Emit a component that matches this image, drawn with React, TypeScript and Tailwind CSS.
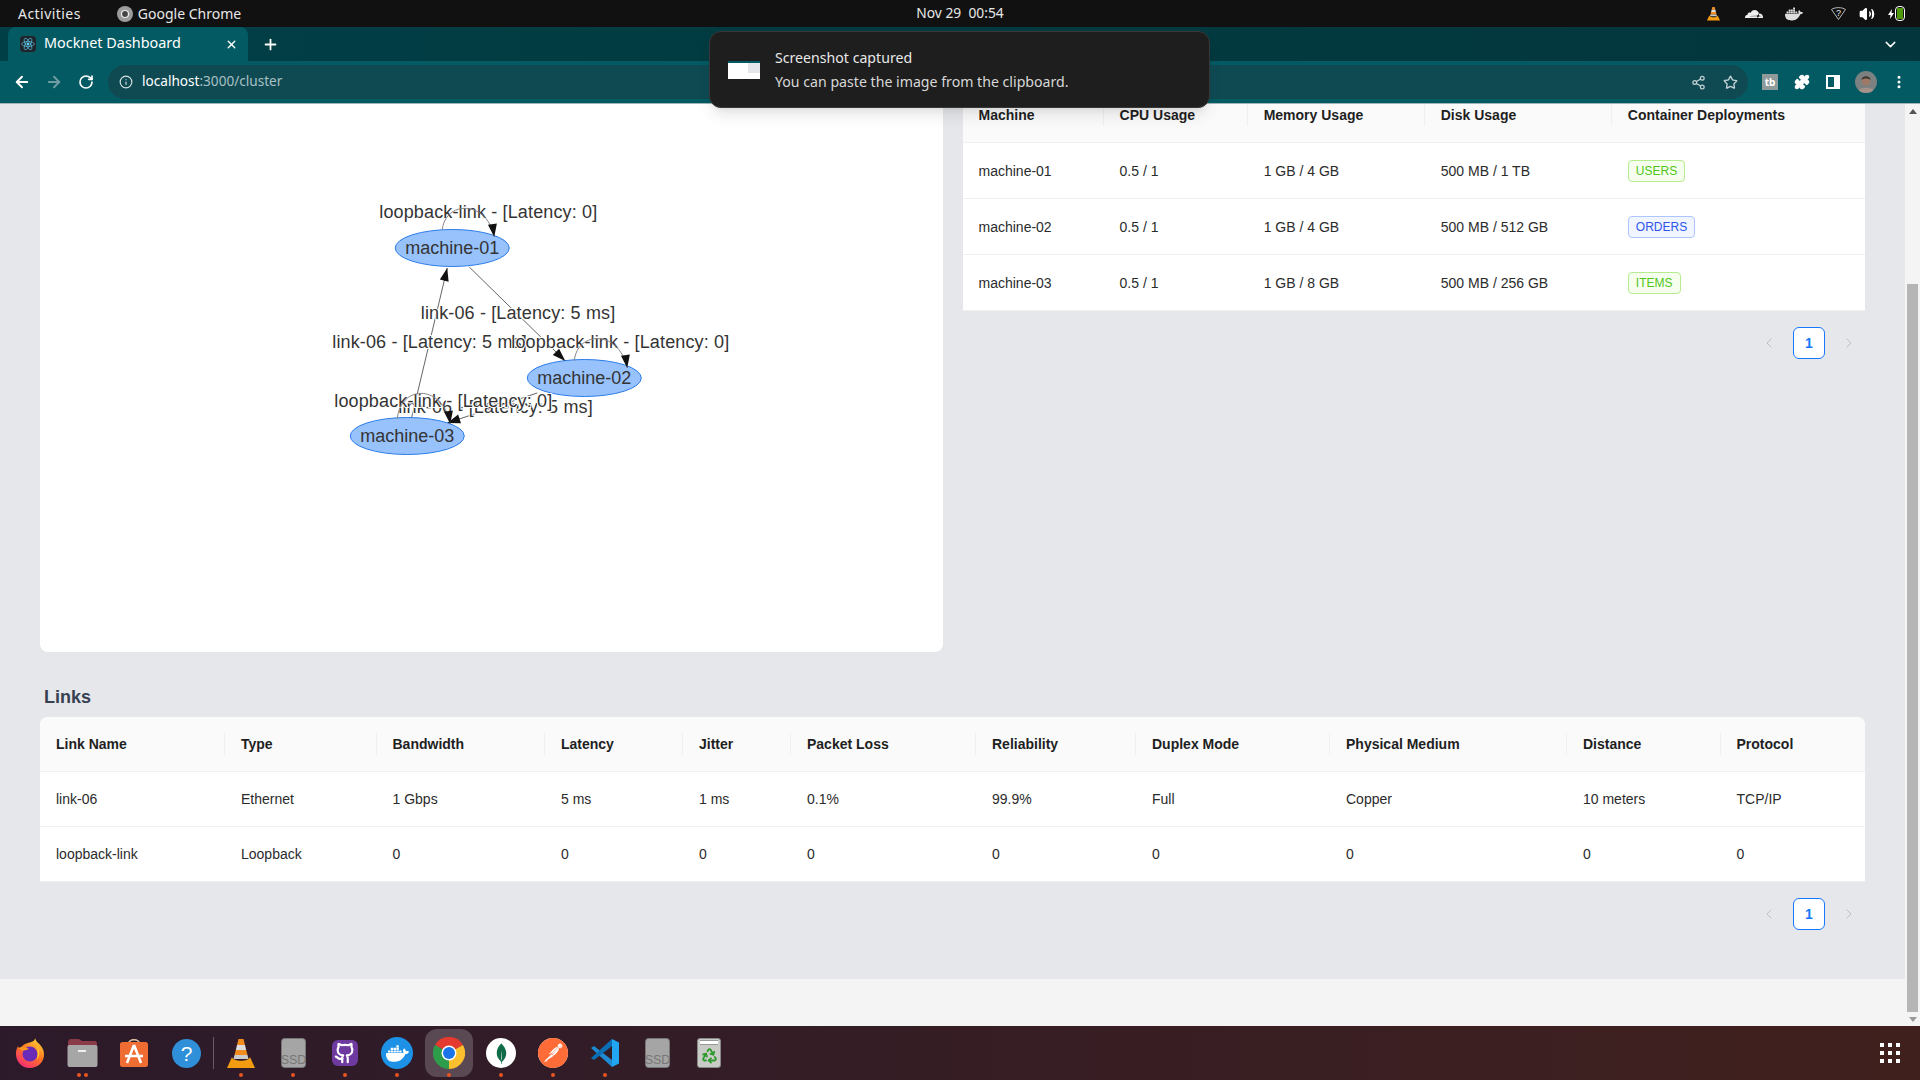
import React from 'react';
import { ArrowLeft, ArrowRight, ChevronDown, ChevronLeft, ChevronRight, EllipsisVertical, Github, Info, Plus, Puzzle, Recycle, RotateCw, Share2, Star, Volume2, X } from 'lucide-react';
import { SiCloudflare, SiDocker, SiMongodb, SiPostman } from 'react-icons/si';

const machineCols = ['w-[141px]', 'w-[144px]', 'w-[177px]', 'w-[187px]', 'w-[253px]'];
const linkCols = ['w-[185px]', 'w-[151.5px]', 'w-[168.5px]', 'w-[138px]', 'w-[108px]', 'w-[185px]', 'w-[160px]', 'w-[194px]', 'w-[237px]', 'w-[153.5px]', 'w-[144.5px]'];

const machines = [
    { name: 'machine-01', cpu: '0.5 / 1', mem: '1 GB / 4 GB', disk: '500 MB / 1 TB', tag: 'USERS', tagClass: 'bg-[#f6ffed] border-[#b7eb8f] text-[#52c41a]' },
    { name: 'machine-02', cpu: '0.5 / 1', mem: '1 GB / 4 GB', disk: '500 MB / 512 GB', tag: 'ORDERS', tagClass: 'bg-[#f0f5ff] border-[#adc6ff] text-[#2f54eb]' },
    { name: 'machine-03', cpu: '0.5 / 1', mem: '1 GB / 8 GB', disk: '500 MB / 256 GB', tag: 'ITEMS', tagClass: 'bg-[#f6ffed] border-[#b7eb8f] text-[#52c41a]' },
];

const linkHeaders = ['Link Name', 'Type', 'Bandwidth', 'Latency', 'Jitter', 'Packet Loss', 'Reliability', 'Duplex Mode', 'Physical Medium', 'Distance', 'Protocol'];
const links = [
    ['link-06', 'Ethernet', '1 Gbps', '5 ms', '1 ms', '0.1%', '99.9%', 'Full', 'Copper', '10 meters', 'TCP/IP'],
    ['loopback-link', 'Loopback', '0', '0', '0', '0', '0', '0', '0', '0', '0'],
];

// arrow head drawn from its tip, dx/dy is the travel direction
const ArrowHead = ({ x, y, dx, dy }: { x: number; y: number; dx: number; dy: number }) => {
    const len = Math.hypot(dx, dy);
    const ux = dx / len;
    const uy = dy / len;
    const bx = x - ux * 13;
    const by = y - uy * 13;
    return <polygon points={`${x},${y} ${bx - uy * 4.5},${by + ux * 4.5} ${bx + uy * 4.5},${by - ux * 4.5}`} className="fill-[#111]" />;
};

const GraphLabel = ({ x, y, children }: { x: number; y: number; children: string }) => (
    <text x={x} y={y} className="text-[18px] tracking-[0.14px] fill-[#343434] stroke-white [stroke-width:2px] [paint-order:stroke]">{children}</text>
);

const GraphNode = ({ x, y, label }: { x: number; y: number; label: string }) => (
    <g>
        <ellipse cx={x} cy={y} rx="57" ry="18.5" className="fill-[#97c2fc] stroke-[#2b7ce9]" />
        <text x={x} y={y + 6} textAnchor="middle" className="text-[18px] fill-[#343434]">{label}</text>
    </g>
);

const ClusterGraph = () => (
    <svg viewBox="41 104 902 548" className="w-full h-full font-['Liberation_Sans',sans-serif]">
        <g className="fill-none stroke-[#666]">
            <path d="M470 267 L566 361" />
            <path d="M412 419 L448 268" />
            <path d="M538 393 L448 423" />
        </g>
        <GraphNode x={453} y={248} label="machine-01" />
        <GraphNode x={585} y={378} label="machine-02" />
        <GraphNode x={408} y={436} label="machine-03" />
        <ArrowHead x={566} y={361} dx={96} dy={94} />
        <ArrowHead x={448} y={268} dx={36} dy={-151} />
        <ArrowHead x={448} y={423} dx={-90} dy={30} />
        <GraphLabel x={380} y={218}>loopback-link - [Latency: 0]</GraphLabel>
        <GraphLabel x={421.5} y={319}>link-06 - [Latency: 5 ms]</GraphLabel>
        <GraphLabel x={333} y={348}>link-06 - [Latency: 5 ms]</GraphLabel>
        <GraphLabel x={512} y={348}>loopback-link - [Latency: 0]</GraphLabel>
        <GraphLabel x={399} y={413}>link-06 - [Latency: 5 ms]</GraphLabel>
        <GraphLabel x={335} y={407}>loopback-link - [Latency: 0]</GraphLabel>
        {/* self loops run over their own labels */}
        <g className="fill-none stroke-[#888]">
            <path d="M443 230 C446 200 488 200 495 237" />
            <path d="M575 361 C578 330 620 330 628 368" />
            <path d="M398 419 C401 384 444 384 451 424" />
        </g>
        <ArrowHead x={495} y={237} dx={1} dy={7} />
        <ArrowHead x={628} y={368} dx={1} dy={7} />
        <ArrowHead x={451} y={424} dx={1} dy={7} />
    </svg>
);

const HeaderCell = ({ children, last, className }: { children: string; last?: boolean; className: string }) => (
    <th className={`relative px-4 text-left text-sm font-bold text-[#1f1f1f] align-top ${className}`}>
        {children}
        {!last && <span className="absolute right-0 w-px h-[22px] bg-[#f0f0f0] top-0" />}
    </th>
);

const Pagination = () => (
    <div className="flex justify-end items-center gap-2 mt-4">
        <div className="w-8 h-8 flex items-center justify-center text-[#bfbfbf]"><ChevronLeft size={16} strokeWidth={1.5} /></div>
        <div className="w-8 h-8 flex items-center justify-center rounded-md border border-[#1677ff] bg-white text-sm font-semibold text-[#1677ff]">1</div>
        <div className="w-8 h-8 flex items-center justify-center text-[#bfbfbf]"><ChevronRight size={16} strokeWidth={1.5} /></div>
    </div>
);

const MachinesTable = () => (
    <table className="w-full table-fixed border-collapse bg-white text-sm text-[#2b2b2b]">
        <colgroup>{machineCols.map((c) => <col key={c} className={c} />)}</colgroup>
        <thead>
            <tr className="h-[38px] bg-[#fafafa] border-b border-[#f0f0f0]">
                {['Machine', 'CPU Usage', 'Memory Usage', 'Disk Usage', 'Container Deployments'].map((h, i) => (
                    <HeaderCell key={h} last={i === 4} className="leading-[22px]">{h}</HeaderCell>
                ))}
            </tr>
        </thead>
        <tbody>
            {machines.map((m) => (
                <tr key={m.name} className="h-[56px] border-b border-[#f0f0f0]">
                    <td className="px-4 pt-0.5">{m.name}</td>
                    <td className="px-4 pt-0.5">{m.cpu}</td>
                    <td className="px-4 pt-0.5">{m.mem}</td>
                    <td className="px-4 pt-0.5">{m.disk}</td>
                    <td className="px-4 pt-0.5">
                        <span className={`inline-block h-[22px] px-[7px] rounded border text-xs leading-5 ${m.tagClass}`}>{m.tag}</span>
                    </td>
                </tr>
            ))}
        </tbody>
    </table>
);

const LinksTable = () => (
    <div className="rounded-t-lg overflow-hidden">
        <table className="w-full table-fixed border-collapse bg-white text-sm text-[#2b2b2b]">
            <colgroup>{linkCols.map((c) => <col key={c} className={c} />)}</colgroup>
            <thead>
                <tr className="h-[54px] bg-[#fafafa] border-b border-[#f0f0f0]">
                    {linkHeaders.map((h, i) => (
                        <th key={h} className="relative px-4 text-left text-sm font-bold text-[#1f1f1f]">
                            {h}
                            {i < linkHeaders.length - 1 && <span className="absolute right-0 top-4 w-px h-[22px] bg-[#f0f0f0]" />}
                        </th>
                    ))}
                </tr>
            </thead>
            <tbody>
                {links.map((row) => (
                    <tr key={row[0]} className="h-[55px] border-b border-[#f0f0f0]">
                        {row.map((cell, i) => <td key={i} className="px-4">{cell}</td>)}
                    </tr>
                ))}
            </tbody>
        </table>
    </div>
);

/* ---------- desktop icons ---------- */

const VlcCone = ({ size }: { size: number }) => (
    <svg width={size} height={size} viewBox="0 0 32 32">
        <path d="M13.5 2 h5 l1.5 6 h-8z" fill="#f28c1e" />
        <path d="M12 8 h8 l1.2 5 h-10.4z" fill="#ddd" />
        <path d="M10.8 13 h10.4 l1.3 5 h-13z" fill="#f28c1e" />
        <path d="M9.5 18 h13 l1 4 h-15z" fill="#ccc" />
        <path d="M7 20 L2 31 H30 L25 20 C24 25 8 25 7 20Z" fill="#f39c12" />
    </svg>
);

const FirefoxIcon = () => (
    <svg width="30" height="32" viewBox="0 0 30 32">
        <defs>
            <linearGradient id="ffBody" x1="0.8" y1="0" x2="0.2" y2="1">
                <stop offset="0" stopColor="#ffd83a" />
                <stop offset="0.45" stopColor="#ff7a1f" />
                <stop offset="1" stopColor="#f5267a" />
            </linearGradient>
        </defs>
        <path d="M20 1 C21 5 24 6 26 9 C30 14 30 21 26 26 C21 32 10 33 5 27 C0 22 0 14 3 9 C3.500 11 4 12 5 13 C6 9 9 7 13 6 C17 5 20 4 20 1Z" fill="url(#ffBody)" />
        <circle cx="15" cy="17" r="7.500" fill="#6a2bb8" />
        <path d="M3 11 C7 9 11 10 14 12 C11 13 9 14 7 13 C5 13 4 12 3 11Z" fill="#ff9a1f" />
        <path d="M22 9 C25 13 25 19 22 23 C23 18 23 14 22 9Z" fill="#ffca3a" />
    </svg>
);

const FolderIcon = () => (
    <svg width="31" height="30" viewBox="0 0 31 30">
        <path d="M1 5 Q1 1 4 1 H12 L15 3 H28 Q30 3 30 6 V12 H1Z" fill="#8a3b49" />
        <rect x="0.500" y="7" width="30" height="22" rx="2" fill="#a6a6a6" />
        <rect x="11" y="12" width="8" height="2" fill="#eee" />
    </svg>
);

const AppStoreIcon = () => (
    <svg width="30" height="30" viewBox="0 0 30 30">
        <path d="M9 7 C9 0 21 0 21 7" fill="none" stroke="#e8c9a8" strokeWidth="1.5" />
        <rect x="1" y="4" width="28" height="25" rx="2.500" fill="#ef6c33" />
        <path d="M15 7 L8 25 M15 7 L22 25 M6 18 H24" stroke="#fff" strokeWidth="2.600" fill="none" />
    </svg>
);

const HelpIcon = () => (
    <svg width="29" height="29" viewBox="0 0 29 29">
        <circle cx="14.500" cy="14.500" r="14.500" fill="#2f8fd8" />
        <text x="14.500" y="22" textAnchor="middle" fontSize="21" fill="#fff" fontFamily="Liberation Sans, sans-serif">?</text>
    </svg>
);

const SsdIcon = () => (
    <svg width="25" height="30" viewBox="0 0 25 30">
        <rect x="0.500" y="0.500" width="24" height="29" rx="3" fill="#a5a5a5" stroke="#777" />
        <text x="12.500" y="26" textAnchor="middle" fontSize="12.500" fill="#777" fontFamily="Liberation Sans, sans-serif">SSD</text>
    </svg>
);

const ChromeIcon = () => (
    <svg width="32" height="32" viewBox="0 0 32 32">
        <path d="M16 16 L2.100 8 A16 16 0 0 1 29.900 8Z" fill="#e53a2f" />
        <path d="M16 16 L29.900 8 A16 16 0 0 1 16 32Z" fill="#fbc02d" />
        <path d="M16 16 L16 32 A16 16 0 0 1 2.100 8Z" fill="#2e9d4b" />
        <circle cx="16" cy="16" r="7.500" fill="#fff" />
        <circle cx="16" cy="16" r="6" fill="#1a73e8" />
    </svg>
);

const VscodeIcon = () => (
    <svg width="30" height="30" viewBox="0 0 30 30">
        <polygon points="1,10 4,8 22,22 22,29" fill="#1f8ad2" />
        <polygon points="1,20 4,22 22,8 22,1" fill="#0a6fb5" />
        <polygon points="22,1 29,4.500 29,25.500 22,29" fill="#23a6f2" />
    </svg>
);

const TrashIcon = () => (
    <div className="relative w-[24px] h-[30px] rounded-[3px] bg-[#c9cbc6] border border-[#888] flex flex-col items-center">
        <div className="w-[18px] h-[5px] mt-px bg-white border-y border-[#999]" />
        <Recycle size={17} strokeWidth={2.6} className="text-[#2e9a2e] mt-[2px]" />
    </div>
);

const DockItem = ({ dots = 0, active, children }: { dots?: number; active?: boolean; children: React.ReactNode }) => (
    <div className="relative w-[52px] h-[54px] flex items-center justify-center">
        {active && <div className="absolute left-0.5 right-0.5 top-[3px] bottom-[3px] rounded-xl bg-white/20" />}
        <div className="relative flex items-center justify-center">{children}</div>
        {dots > 0 && (
            <div className="absolute bottom-[3px] left-0 right-0 flex justify-center gap-[3px]">
                {dots > 1 && <span className="w-[4px] h-[4px] rounded-full bg-[#e95420]" />}
                <span className="w-[4px] h-[4px] rounded-full bg-[#e95420]" />
            </div>
        )}
    </div>
);

const Dock = () => (
    <div className="h-[54px] flex items-center pl-1 bg-gradient-to-r from-[#2c1a2a] to-[#40201d]">
        <DockItem><FirefoxIcon /></DockItem>
        <DockItem dots={2}><FolderIcon /></DockItem>
        <DockItem><AppStoreIcon /></DockItem>
        <DockItem><HelpIcon /></DockItem>
        <div className="w-[3px] h-[32px] flex justify-center"><div className="w-px h-full bg-[#6a5a66]" /></div>
        <DockItem dots={1}><VlcCone size={32} /></DockItem>
        <DockItem dots={1}><SsdIcon /></DockItem>
        <DockItem dots={1}>
            <div className="w-[26px] h-[26px] rounded-md bg-[#6f3aa0] flex items-center justify-center">
                <Github size={22} strokeWidth={2.4} className="text-white" />
            </div>
        </DockItem>
        <DockItem dots={1}>
            <div className="w-8 h-8 rounded-full bg-[#1d91e5] flex items-center justify-center">
                <SiDocker size={23} className="text-white" />
            </div>
        </DockItem>
        <DockItem dots={1} active><ChromeIcon /></DockItem>
        <DockItem dots={1}>
            <div className="w-[30px] h-[30px] rounded-full bg-white flex items-center justify-center">
                <SiMongodb size={21} className="text-[#0f6b48]" />
            </div>
        </DockItem>
        <DockItem dots={1}>
            <div className="w-[30px] h-[30px] rounded-full bg-white flex items-center justify-center">
                <SiPostman size={30} className="text-[#ff6c37]" />
            </div>
        </DockItem>
        <DockItem dots={1}><VscodeIcon /></DockItem>
        <DockItem><SsdIcon /></DockItem>
        <DockItem><TrashIcon /></DockItem>
        <div className="ml-auto mr-5 grid grid-cols-3 gap-1">
            {[0, 1, 2, 3, 4, 5, 6, 7, 8].map((i) => <span key={i} className="w-1 h-1 bg-white" />)}
        </div>
    </div>
);

const TopBar = () => (
    <div className="relative h-[27px] flex items-center bg-[#111] text-[14px] text-[#e8e8e8] font-['Noto_Sans',sans-serif]">
        <span className="ml-[18px] tracking-[0.45px]">Activities</span>
        <svg width="16" height="16" viewBox="0 0 16 16" className="ml-[36px]">
            <circle cx="8" cy="8" r="8" fill="#9c9c9c" />
            <circle cx="8" cy="8" r="3.500" fill="#444" stroke="#eee" strokeWidth="1.200" />
        </svg>
        <span className="ml-[5px]">Google Chrome</span>
        <span className="absolute left-0 right-0 text-center text-[13.8px] whitespace-pre">Nov 29  00:54</span>
        <div className="ml-auto flex items-center">
            <VlcCone size={15} />
            <SiCloudflare size={18} className="ml-[24px] text-[#eee]" />
            <SiDocker size={18} className="ml-[22px] text-[#ddd]" />
            <svg width="15" height="13" viewBox="0 0 15 13" className="ml-[28px]">
                <path d="M0.500 2.500 C4 0 11 0 14.500 2.500 L7.500 12.500Z" fill="none" stroke="#bbb" />
                <text x="7.500" y="9" textAnchor="middle" fontSize="9" fill="#eee" fontFamily="Liberation Sans, sans-serif">?</text>
            </svg>
            <Volume2 size={16} className="ml-[13px] text-white fill-white" />
            <div className="ml-[13px] mr-[15px] flex items-center gap-px">
                <svg width="6" height="10" viewBox="0 0 6 10"><path d="M4 0 L0 6 H2.500 L2 10 L6 4 H3.500Z" fill="#fff" /></svg>
                <div className="w-[10px] h-[15px] rounded-sm border border-white p-px">
                    <div className="w-full h-full bg-[#4f9a0c]" />
                </div>
            </div>
        </div>
    </div>
);

const TabStrip = () => (
    <div className="h-[34px] flex items-end bg-gradient-to-r from-[#013f46] to-[#02363c] font-['Noto_Sans',sans-serif]">
        <div className="ml-2 w-[240px] h-[34px] rounded-t-lg bg-[#035a63] flex items-center text-white">
            <div className="ml-3 w-4 h-4 rounded-sm bg-[#20232a] flex items-center justify-center">
                <svg width="14" height="14" viewBox="-12 -12 24 24" className="fill-none stroke-[#61dafb]">
                    <ellipse rx="11" ry="4.200" />
                    <ellipse rx="11" ry="4.200" transform="rotate(60)" />
                    <ellipse rx="11" ry="4.200" transform="rotate(120)" />
                    <circle r="2" className="fill-[#61dafb]" />
                </svg>
            </div>
            <span className="ml-2 mb-0.5 text-[14.4px]">Mocknet Dashboard</span>
            <X size={13} strokeWidth={2.5} className="ml-auto mr-[10px]" />
        </div>
        <Plus size={17} strokeWidth={2.5} className="ml-[14px] mb-2 text-white" />
        <ChevronDown size={17} className="ml-auto mr-[21px] mb-2 text-white" />
    </div>
);

const Toolbar = () => (
    <div className="h-[43px] flex items-center bg-[#035a63] border-b border-[#9fb4b6] font-['Noto_Sans',sans-serif]">
        <ArrowLeft size={18} strokeWidth={2.5} className="ml-[13px] text-white" />
        <ArrowRight size={18} strokeWidth={2.5} className="ml-[14px] text-[#6f9ca1]" />
        <RotateCw size={16} strokeWidth={2.5} className="ml-[15px] text-white" />
        <div className="ml-[14px] w-[1640px] h-[34px] rounded-full bg-[#0f4a53] flex items-center">
            <Info size={14} className="ml-[11px] text-[#d5e0e2]" />
            <span className="ml-[9px] mb-0.5 text-[13.6px] text-white">localhost<span className="text-[#a9c0c4]">:3000/cluster</span></span>
            <Share2 size={15} className="ml-auto text-[#c2d2d4]" />
            <Star size={15} strokeWidth={2.2} className="ml-[17px] mr-[10px] text-[#c2d2d4]" />
        </div>
        <div className="ml-[14px] w-4 h-4 bg-[#8f9a9b] text-white text-[10px] font-bold flex items-center justify-center">tb</div>
        <Puzzle size={16} className="ml-4 text-white fill-white" />
        <div className="ml-4 w-[14px] h-[14px] bg-white flex justify-start border-2 border-white"><div className="w-[6px] h-full bg-[#035a63]" /></div>
        <svg width="22" height="22" viewBox="0 0 22 22" className="ml-[15px] rounded-full">
            <rect width="22" height="22" fill="#7a8180" />
            <path d="M2 22 C3 15 19 15 20 22Z" fill="#a5928a" />
            <circle cx="11" cy="10" r="4.500" fill="#9c7a66" />
            <path d="M6.500 9 C6.500 4 15.500 4 15.500 9 C13 7 9 7 6.500 9Z" fill="#3a3532" />
        </svg>
        <EllipsisVertical size={16} strokeWidth={2.5} className="ml-[14px] text-white" />
    </div>
);

const Notification = () => (
    <div className="absolute left-[709px] top-[31px] w-[501px] h-[77px] rounded-xl bg-[#1e1e1e] border border-[#383838] shadow-lg flex items-center font-['Noto_Sans',sans-serif]">
        <div className="ml-[18px] w-[32px] h-[18px] bg-white border-t-2 border-[#035a63] flex justify-end">
            <div className="w-3 h-[10px] bg-[#e4e6ea]" />
        </div>
        <div className="ml-[15px] flex flex-col gap-[5px] text-[#e8e8e8] text-[14.15px] leading-[19px]">
            <span>Screenshot captured</span>
            <span className="text-[#d8d8d8]">You can paste the image from the clipboard.</span>
        </div>
    </div>
);

const App: React.FC = () => {
    return (
        <div className="relative w-[1920px] h-[1080px] overflow-hidden flex flex-col bg-[#f4f4f4] font-['Liberation_Sans',Arial,sans-serif]">
            <TopBar />
            <TabStrip />
            <Toolbar />

            <div className="flex-1 flex min-h-0">
                <div className="w-[1905px] flex flex-col">
                    <main className="bg-[#e5e7eb] px-10 pb-[49px]">
                        {/* Graph and machines */}
                        <div className="grid grid-cols-2 gap-5">
                            <div className="h-[548px] bg-white rounded-b-lg">
                                <ClusterGraph />
                            </div>
                            <div>
                                <MachinesTable />
                                <Pagination />
                            </div>
                        </div>

                        {/* Links */}
                        <h2 className="mt-[31px] mb-[6px] pl-1 text-lg font-bold text-[#374151]">Links</h2>
                        <LinksTable />
                        <Pagination />
                    </main>
                </div>

                {/* Scrollbar */}
                <div className="w-[15px] flex flex-col items-center bg-[#f4f4f4]">
                    <div className="h-[14px] flex items-center"><span className="border-x-[4px] border-x-transparent border-b-[5px] border-b-[#555]" /></div>
                    <div className="mt-[166px] w-[11px] flex-1 bg-[#b5b5b5]" />
                    <div className="h-[14px] flex items-center"><span className="border-x-[4px] border-x-transparent border-t-[5px] border-t-[#999]" /></div>
                </div>
            </div>

            <Dock />
            <Notification />
        </div>
    );
};

export default App;
